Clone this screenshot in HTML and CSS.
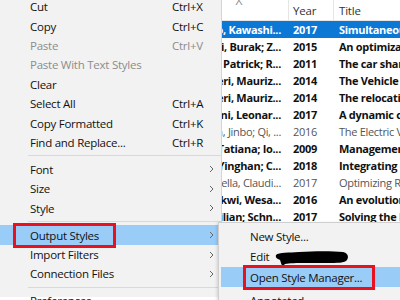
FILE: index.html
```html
<!DOCTYPE html>
<html>
<head>
<meta charset="utf-8">
<link rel="stylesheet" href="styles.css">
</head>
<body>
<div class="screen">
  <div class="menu">
    <div class="item"><span class="label">Cut</span><span class="key">Ctrl+X</span></div>
    <div class="item"><span class="label">Copy</span><span class="key">Ctrl+C</span></div>
    <div class="item disabled"><span class="label">Paste</span><span class="key">Ctrl+V</span></div>
    <div class="item disabled"><span class="label">Paste With Text Styles</span></div>
    <div class="item"><span class="label">Clear</span></div>
    <div class="item"><span class="label">Select All</span><span class="key">Ctrl+A</span></div>
    <div class="item"><span class="label">Copy Formatted</span><span class="key">Ctrl+K</span></div>
    <div class="item"><span class="label">Find and Replace...</span><span class="key">Ctrl+R</span></div>
    <div class="sep"></div>
    <div class="item"><span class="label">Font</span><svg class="chev" width="5" height="8" viewBox="0 0 5 8"><polyline points="1,1 4,4 1,7" fill="none" stroke="#666" stroke-width="1"/></svg></div>
    <div class="item"><span class="label">Size</span><svg class="chev" width="5" height="8" viewBox="0 0 5 8"><polyline points="1,1 4,4 1,7" fill="none" stroke="#666" stroke-width="1"/></svg></div>
    <div class="item"><span class="label">Style</span><svg class="chev" width="5" height="8" viewBox="0 0 5 8"><polyline points="1,1 4,4 1,7" fill="none" stroke="#666" stroke-width="1"/></svg></div>
    <div class="sep"></div>
    <div class="item hot"><span class="label">Output Styles</span><svg class="chev" width="5" height="8" viewBox="0 0 5 8"><polyline points="1,1 4,4 1,7" fill="none" stroke="#666" stroke-width="1"/></svg><span class="redbox rb1"></span></div>
    <div class="item"><span class="label">Import Filters</span><svg class="chev" width="5" height="8" viewBox="0 0 5 8"><polyline points="1,1 4,4 1,7" fill="none" stroke="#666" stroke-width="1"/></svg></div>
    <div class="item"><span class="label">Connection Files</span><svg class="chev" width="5" height="8" viewBox="0 0 5 8"><polyline points="1,1 4,4 1,7" fill="none" stroke="#666" stroke-width="1"/></svg></div>
    <div class="sep"></div>
    <div class="item"><span class="label">Preferences</span></div>
  </div>

  <div class="table">
    <div class="row head">
      <div class="cell author"><span class="sort">^</span></div>
      <div class="cell year">Year</div>
      <div class="cell title">Title</div>
    </div>
    <div class="row sel"><div class="cell author"><span>Ito, Kawashi...</span></div><div class="cell year">2017</div><div class="cell title">Simultaneous optimization</div></div>
    <div class="row"><div class="cell author"><span>Boyaci, Burak; Z...</span></div><div class="cell year">2015</div><div class="cell title">An optimization framework</div></div>
    <div class="row"><div class="cell author"><span>Vogel, Patrick; R...</span></div><div class="cell year">2011</div><div class="cell title">The car sharing</div></div>
    <div class="row"><div class="cell author"><span>Bruglieri, Mauriz...</span></div><div class="cell year">2014</div><div class="cell title">The Vehicle Relocation</div></div>
    <div class="row"><div class="cell author"><span>Bruglieri, Mauriz...</span></div><div class="cell year">2014</div><div class="cell title">The relocation problem</div></div>
    <div class="row"><div class="cell author"><span>Pagani, Leonar...</span></div><div class="cell year">2017</div><div class="cell title">A dynamic clustering</div></div>
    <div class="row read"><div class="cell author"><span>Yan, Jinbo; Qi, ...</span></div><div class="cell year">2016</div><div class="cell title">The Electric Vehicle</div></div>
    <div class="row"><div class="cell author"><span>Babicheva, Tatiana; Io...</span></div><div class="cell year">2009</div><div class="cell title">Management of</div></div>
    <div class="row"><div class="cell author"><span>Wang, Yinghan; C...</span></div><div class="cell year">2018</div><div class="cell title">Integrating electric</div></div>
    <div class="row read"><div class="cell author"><span>Gambella, Claudi...</span></div><div class="cell year">2017</div><div class="cell title">Optimizing Relocation</div></div>
    <div class="row"><div class="cell author"><span>Nakwi, Wesa...</span></div><div class="cell year">2016</div><div class="cell title">An evolutionary</div></div>
    <div class="row"><div class="cell author"><span>Maximilian; Schn...</span></div><div class="cell year">2017</div><div class="cell title">Solving the long</div></div>
    <div class="row"><div class="cell author"><span>Weikl, Simone</span></div><div class="cell year">2016</div><div class="cell title">Relocation</div></div>
    <div class="row"><div class="cell author"><span>Weikl, Simone</span></div><div class="cell year">2015</div><div class="cell title">Relocation</div></div>
    <div class="row"><div class="cell author"><span>Weikl, Simone</span></div><div class="cell year">2015</div><div class="cell title">Relocation</div></div>
  </div>

  <div class="submenu">
    <div class="sitem"><span class="label">New Style...</span></div>
    <div class="sitem"><span class="label">Edit</span><svg class="blot" width="74" height="17" viewBox="0 0 74 17"><path d="M1 5 C4 2 14 3 24 2 C40 1 58 1 68 2 C73 3 74 7 72 10 C70 13 62 13 52 13 L30 13 C22 13 14 13 10 14 L8 16 C6 15 6 12 5 10 C3 9 0 8 1 5 Z" fill="#000"/></svg></div>
    <div class="sitem hot"><span class="label">Open Style Manager...</span><span class="redbox rb2"></span></div>
    <div class="ssep"></div>
    <div class="sitem"><span class="label">Annotated</span></div>
  </div>
</div>
</body>
</html>
```

FILE: styles.css
```css
html, body {
  margin: 0;
  padding: 0;
  background: #ffffff;
}
.screen {
  position: relative;
  width: 400px;
  height: 300px;
  overflow: hidden;
  display: flex;
  font-family: "Open Sans", "Noto Sans", sans-serif;
  font-size: 11.5px;
  letter-spacing: -0.25px;
  color: #111;
}
.menu {
  flex: 0 0 222px;
  box-sizing: border-box;
  height: 300px;
  background: #f2f2f2;
  border-right: 1px solid #d5d5d5;
  margin-top: -3px;
  display: flex;
  flex-direction: column;
  position: relative;
  z-index: 2;
}
.item {
  position: relative;
  flex: 0 0 19.4px;
  display: flex;
  align-items: center;
  padding-left: 30px;
  padding-right: 7px;
}
.item .label {
  flex: 1;
  white-space: nowrap;
}
.item .key {
  width: 42px;
}
.item.disabled {
  color: #8c8c8c;
}
.item.hot {
  background: #99ccf7;
}
.sep {
  flex: 0 0 7.6px;
  display: flex;
  align-items: center;
  padding-left: 28px;
}
.sep::after {
  content: "";
  flex: 1;
  height: 1px;
  background: #d9d9d9;
}
.redbox {
  position: absolute;
  box-sizing: border-box;
  border: 3px solid #e8121f;
}
.rb1 {
  left: 13px;
  width: 103px;
  top: -2px;
  bottom: -3px;
}
.rb2 {
  left: 22px;
  width: 132px;
  top: -2px;
  bottom: -3px;
}
.table {
  flex: 1;
  display: flex;
  flex-direction: column;
  background: #fff;
}
.row {
  display: grid;
  grid-template-columns: 67px 45px 1fr;
  height: 17px;
  align-items: center;
  font-size: 11px;
  letter-spacing: -0.3px;
  font-weight: 700;
  color: #111;
  white-space: nowrap;
}
.row.head {
  height: 20px;
  font-size: 11.5px;
  letter-spacing: -0.2px;
  font-weight: 400;
  color: #333;
  border-bottom: 1px solid #e5e5e5;
}
.row.head .cell {
  height: 20px;
  display: flex;
  align-items: center;
}
.row.head .year, .row.head .author {
  border-right: 1px solid #e5e5e5;
}
.row.sel {
  background: #0b78d6;
  color: #fff;
}
.row.read {
  font-weight: 400;
  color: #555;
}
.cell {
  overflow: hidden;
  white-space: nowrap;
}
.author {
  display: flex;
  justify-content: flex-end;
  padding-right: 8px;
}
.row.head .author {
  justify-content: flex-start;
  padding-left: 14px;
  padding-right: 0;
  align-items: flex-start;
}
.sort {
  font-size: 10px;
  line-height: 8px;
  color: #888;
  transform: scaleX(1.4);
}
.year {
  padding-left: 4px;
}
.title {
  padding-left: 5px;
}
.submenu {
  position: absolute;
  left: 218px;
  top: 222px;
  width: 200px;
  height: 90px;
  box-sizing: border-box;
  background: #f2f2f2;
  border: 1px solid #cfcfcf;
  box-shadow: -1px 1px 3px rgba(0,0,0,0.15);
  padding-top: 3px;
  z-index: 3;
  display: flex;
  flex-direction: column;
}
.sitem {
  position: relative;
  flex: 0 0 20px;
  display: flex;
  align-items: center;
  padding-left: 31px;
  white-space: nowrap;
}
.sitem.hot {
  background: #99ccf7;
  margin-left: 2px;
  padding-left: 29px;
}
.blot {
  flex: 0 0 74px;
  margin-left: 6px;
  margin-top: 4px;
}
.ssep {
  flex: 0 0 3px;
}
```
